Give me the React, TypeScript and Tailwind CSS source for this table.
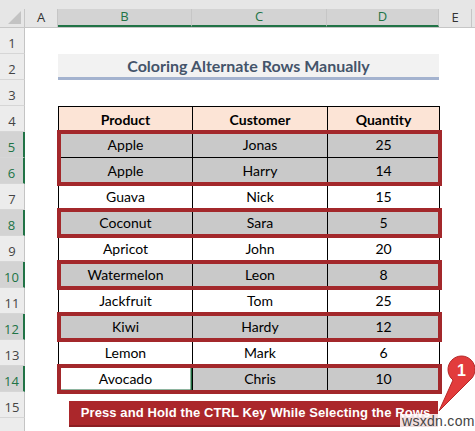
import React from 'react';

type Row = { n: number; product: string; customer: string; qty: string; gray: boolean; active?: boolean };

const rows: Row[] = [
  { n: 5, product: 'Apple', customer: 'Jonas', qty: '25', gray: true },
  { n: 6, product: 'Apple', customer: 'Harry', qty: '14', gray: true },
  { n: 7, product: 'Guava', customer: 'Nick', qty: '15', gray: false },
  { n: 8, product: 'Coconut', customer: 'Sara', qty: '5', gray: true },
  { n: 9, product: 'Apricot', customer: 'John', qty: '20', gray: false },
  { n: 10, product: 'Watermelon', customer: 'Leon', qty: '8', gray: true },
  { n: 11, product: 'Jackfruit', customer: 'Tom', qty: '25', gray: false },
  { n: 12, product: 'Kiwi', customer: 'Hardy', qty: '12', gray: true },
  { n: 13, product: 'Lemon', customer: 'Mark', qty: '6', gray: false },
  { n: 14, product: 'Avocado', customer: 'Chris', qty: '10', gray: true, active: true },
];

// groups of rows selected with ctrl (red frames)
const groups: Row[][] = [[rows[0], rows[1]], [rows[2]], [rows[3]], [rows[4]], [rows[5]], [rows[6]], [rows[7]], [rows[8]], [rows[9]]];

const selectedRows = [5, 6, 8, 10, 12, 14];

function RowHead({ n }: { n: number }) {
  const sel = selectedRows.includes(n);
  return (
    <div
      className={
        'h-[26px] pt-[6px] flex items-center justify-center border-b border-[#d6d6d6] text-[13px] ' +
        (sel ? 'bg-[#d3d3d3] text-[#217346] border-r-2 border-r-[#217346]' : 'bg-[#ececec] text-[#444] border-r border-r-[#c4c4c4]')
      }
    >
      {n <= 15 ? n : ''}
    </div>
  );
}

function DataRow({ r }: { r: Row }) {
  const bg = r.gray ? 'bg-[#c9c9c9]' : 'bg-white';
  return (
    <div className="grid grid-cols-[134px_135px_112px] h-[26px] text-[14px] text-black">
      <div className={'border-r border-b border-black flex items-center justify-center ' + (r.active ? 'bg-white shadow-[inset_0_0_0_1.5px_#1f6b40]' : bg)}>{r.product}</div>
      <div className={'border-r border-b border-black flex items-center justify-center ' + bg}>{r.customer}</div>
      <div className={'border-r border-b border-black flex items-center justify-center ' + bg}>{r.qty}</div>
    </div>
  );
}

export default function App() {
  const allRows = Array.from({ length: 16 }, (_, i) => i + 1);
  return (
    <div className="w-[475px] h-[431px] overflow-hidden bg-white relative font-['Lato',sans-serif]">
      {/* column headers */}
      <div className="h-[9px] bg-[#e6e6e6]" />
      <div className="flex h-[19px] bg-[#e6e6e6] text-[13px] font-['Open_Sans',sans-serif] border-b border-[#c6c6c6]">
        <div className="w-[25px] border-r border-[#c6c6c6] relative">
          <div className="absolute right-[3px] bottom-[3px] w-0 h-0 border-l-[13px] border-l-transparent border-b-[13px] border-b-[#c3c3c3]" />
        </div>
        <div className="w-[33px] flex items-center justify-center border-r border-[#c6c6c6] text-[#333]">A</div>
        <div className="w-[134px] flex items-center justify-center border-r border-[#c6c6c6] bg-[#d3d3d3] text-[#217346] border-b-2 border-b-[#217346]">B</div>
        <div className="w-[135px] flex items-center justify-center border-r border-[#c6c6c6] bg-[#d3d3d3] text-[#217346] border-b-2 border-b-[#217346]">C</div>
        <div className="w-[112px] flex items-center justify-center border-r border-[#c6c6c6] bg-[#d3d3d3] text-[#217346] border-b-2 border-b-[#217346]">D</div>
        <div className="w-[33px] flex items-center justify-center border-r border-[#c6c6c6] text-[#333]">E</div>
        <div className="flex-1" />
      </div>

      <div className="flex">
        {/* row headers */}
        <div className="w-[25px] shrink-0 font-['Open_Sans',sans-serif]">
          {allRows.map((n) => (
            <RowHead key={n} n={n} />
          ))}
        </div>

        {/* sheet body */}
        <div className="flex-1 pl-[33px]">
          <div className="h-[26px]" />
          <div className="w-[381px] h-[26px] bg-[#f2f2f2] border-b-[3px] border-[#a4b3cf] flex items-center justify-center text-[16px] font-bold text-[#44546a]">
            Coloring Alternate Rows Manually
          </div>
          <div className="h-[26px]" />

          <div className="w-[382px] border-l border-black">
            <div className="grid grid-cols-[134px_135px_112px] h-[26px] bg-[#fce4d6] text-[14px] font-bold text-black border-t border-black">
              <div className="border-r border-b border-black flex items-center justify-center">Product</div>
              <div className="border-r border-b border-black flex items-center justify-center">Customer</div>
              <div className="border-r border-b border-black flex items-center justify-center">Quantity</div>
            </div>
            {groups.map((g, i) => {
              const framed = g[0].gray;
              return (
                <div key={i} className={framed ? 'relative z-10 outline-4 outline-[#a3282b] outline-offset-[-2px]' : ''}>
                  {g.map((r) => (
                    <DataRow key={r.n} r={r} />
                  ))}
                </div>
              );
            })}
          </div>

          <div className="ml-[11px] mt-[9px] w-[369px] h-[26px] pl-[4px] bg-[#ab272b] border-b-2 border-[#8c1e22] flex items-center justify-center font-['Liberation_Sans',Arial,sans-serif] font-bold text-white text-[13px] tracking-[0.1px]">
            Press and Hold the CTRL Key While Selecting the Rows
          </div>
        </div>
      </div>

      {/* numbered pin callout */}
      <svg className="absolute left-[436px] top-[354px]" width="39" height="60" viewBox="0 0 39 60">
        <path d="M3 57 L17 26 A13.5 13.5 0 1 1 34 26 Z" fill="#e23c3c" stroke="#b52828" strokeWidth="1" />
        <text x="25.5" y="22" textAnchor="middle" fill="white" fontSize="16" fontWeight="bold" fontFamily="Liberation Sans, Arial, sans-serif">1</text>
      </svg>

      <div className="absolute left-[400px] top-[414px] px-[2px] bg-white/85 text-[14px] leading-[14px] text-[#444] font-['Liberation_Sans',Arial,sans-serif] tracking-[0.3px]">
        wsxdn.com
      </div>
    </div>
  );
}
